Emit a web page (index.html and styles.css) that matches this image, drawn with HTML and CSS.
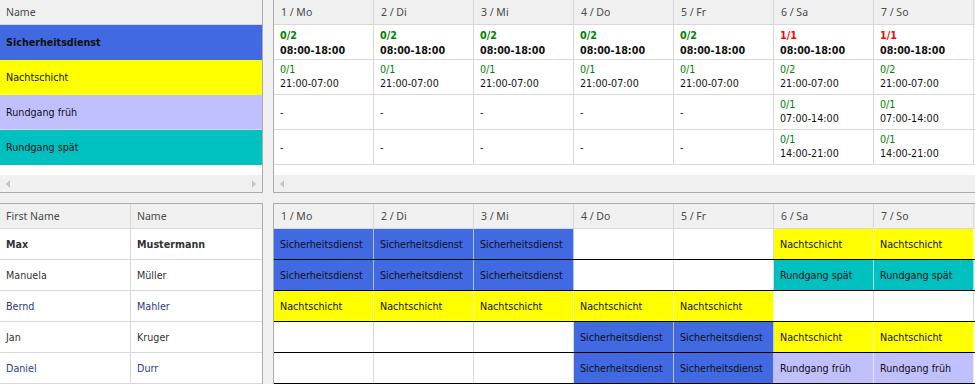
FILE: index.html
```html
<!DOCTYPE html>
<html>
<head>
  <meta charset="UTF-8">
  <title>Dienstplan</title>
  <link rel="stylesheet" href="styles.css">
</head>
<body>
  <div class="pane-row top-row">
    <div class="panel shift-list">
      <div class="grid-head">
        <div class="hcell wide">Name</div>
      </div>
      <div class="grid-body">
        <div class="row shift sd"><div class="cell wide bold">Sicherheitsdienst</div></div>
        <div class="row shift ns"><div class="cell wide">Nachtschicht</div></div>
        <div class="row shift rf"><div class="cell wide">Rundgang früh</div></div>
        <div class="row shift rs"><div class="cell wide">Rundgang spät</div></div>
      </div>
      <div class="filler"></div>
      <div class="hscroll">
        <span class="arrow left"></span>
        <span class="arrow right"></span>
      </div>
    </div>

    <div class="panel shift-days">
      <div class="grid-head">
        <div class="hcell day">1 / Mo</div>
        <div class="hcell day">2 / Di</div>
        <div class="hcell day">3 / Mi</div>
        <div class="hcell day">4 / Do</div>
        <div class="hcell day">5 / Fr</div>
        <div class="hcell day">6 / Sa</div>
        <div class="hcell day">7 / So</div>
      </div>
      <div class="grid-body">
        <div class="row shift">
          <div class="cell day slot bold"><span class="ok">0/2</span><span>08:00-18:00</span></div>
          <div class="cell day slot bold"><span class="ok">0/2</span><span>08:00-18:00</span></div>
          <div class="cell day slot bold"><span class="ok">0/2</span><span>08:00-18:00</span></div>
          <div class="cell day slot bold"><span class="ok">0/2</span><span>08:00-18:00</span></div>
          <div class="cell day slot bold"><span class="ok">0/2</span><span>08:00-18:00</span></div>
          <div class="cell day slot bold"><span class="full">1/1</span><span>08:00-18:00</span></div>
          <div class="cell day slot bold"><span class="full">1/1</span><span>08:00-18:00</span></div>
        </div>
        <div class="row shift">
          <div class="cell day slot"><span class="ok">0/1</span><span>21:00-07:00</span></div>
          <div class="cell day slot"><span class="ok">0/1</span><span>21:00-07:00</span></div>
          <div class="cell day slot"><span class="ok">0/1</span><span>21:00-07:00</span></div>
          <div class="cell day slot"><span class="ok">0/1</span><span>21:00-07:00</span></div>
          <div class="cell day slot"><span class="ok">0/1</span><span>21:00-07:00</span></div>
          <div class="cell day slot"><span class="ok">0/2</span><span>21:00-07:00</span></div>
          <div class="cell day slot"><span class="ok">0/2</span><span>21:00-07:00</span></div>
        </div>
        <div class="row shift">
          <div class="cell day">-</div>
          <div class="cell day">-</div>
          <div class="cell day">-</div>
          <div class="cell day">-</div>
          <div class="cell day">-</div>
          <div class="cell day slot"><span class="ok">0/1</span><span>07:00-14:00</span></div>
          <div class="cell day slot"><span class="ok">0/1</span><span>07:00-14:00</span></div>
        </div>
        <div class="row shift">
          <div class="cell day">-</div>
          <div class="cell day">-</div>
          <div class="cell day">-</div>
          <div class="cell day">-</div>
          <div class="cell day">-</div>
          <div class="cell day slot"><span class="ok">0/1</span><span>14:00-21:00</span></div>
          <div class="cell day slot"><span class="ok">0/1</span><span>14:00-21:00</span></div>
        </div>
      </div>
      <div class="filler"></div>
      <div class="hscroll">
        <span class="arrow left"></span>
      </div>
    </div>
  </div>

  <div class="pane-row bottom-row">
    <div class="panel staff-list">
      <div class="grid-head">
        <div class="hcell first">First Name</div>
        <div class="hcell last">Name</div>
      </div>
      <div class="grid-body">
        <div class="row staff"><div class="cell first bold">Max</div><div class="cell last bold">Mustermann</div></div>
        <div class="row staff"><div class="cell first">Manuela</div><div class="cell last">Müller</div></div>
        <div class="row staff alt"><div class="cell first">Bernd</div><div class="cell last">Mahler</div></div>
        <div class="row staff"><div class="cell first">Jan</div><div class="cell last">Kruger</div></div>
        <div class="row staff alt"><div class="cell first">Daniel</div><div class="cell last">Durr</div></div>
      </div>
    </div>

    <div class="panel roster">
      <div class="grid-head">
        <div class="hcell day">1 / Mo</div>
        <div class="hcell day">2 / Di</div>
        <div class="hcell day">3 / Mi</div>
        <div class="hcell day">4 / Do</div>
        <div class="hcell day">5 / Fr</div>
        <div class="hcell day">6 / Sa</div>
        <div class="hcell day">7 / So</div>
      </div>
      <div class="grid-body">
        <div class="row plan">
          <div class="cell day sd">Sicherheitsdienst</div>
          <div class="cell day sd">Sicherheitsdienst</div>
          <div class="cell day sd">Sicherheitsdienst</div>
          <div class="cell day"></div>
          <div class="cell day"></div>
          <div class="cell day ns">Nachtschicht</div>
          <div class="cell day ns">Nachtschicht</div>
        </div>
        <div class="row plan">
          <div class="cell day sd">Sicherheitsdienst</div>
          <div class="cell day sd">Sicherheitsdienst</div>
          <div class="cell day sd">Sicherheitsdienst</div>
          <div class="cell day"></div>
          <div class="cell day"></div>
          <div class="cell day rs">Rundgang spät</div>
          <div class="cell day rs">Rundgang spät</div>
        </div>
        <div class="row plan">
          <div class="cell day ns">Nachtschicht</div>
          <div class="cell day ns">Nachtschicht</div>
          <div class="cell day ns">Nachtschicht</div>
          <div class="cell day ns">Nachtschicht</div>
          <div class="cell day ns">Nachtschicht</div>
          <div class="cell day"></div>
          <div class="cell day"></div>
        </div>
        <div class="row plan">
          <div class="cell day"></div>
          <div class="cell day"></div>
          <div class="cell day"></div>
          <div class="cell day sd">Sicherheitsdienst</div>
          <div class="cell day sd">Sicherheitsdienst</div>
          <div class="cell day ns">Nachtschicht</div>
          <div class="cell day ns">Nachtschicht</div>
        </div>
        <div class="row plan">
          <div class="cell day"></div>
          <div class="cell day"></div>
          <div class="cell day"></div>
          <div class="cell day sd">Sicherheitsdienst</div>
          <div class="cell day sd">Sicherheitsdienst</div>
          <div class="cell day rf">Rundgang früh</div>
          <div class="cell day rf">Rundgang früh</div>
        </div>
      </div>
    </div>
  </div>
</body>
</html>
```

FILE: styles.css
```css
:root {
  --bg-color: #f0f0f0;
  --panel-border: #acacac;
  --grid-line: #d8d8d8;
  --head-text: #4a4a4a;
  --text-color: #111111;

  --sd-color: #4169e1;
  --ns-color: #ffff00;
  --rf-color: #c0c0ff;
  --rs-color: #00c0c0;

  --open-color: #008000;
  --full-color: #ff0000;
}

html, body {
  height: 100%;
  margin: 0;
  overflow: hidden;
}

body {
  background-color: var(--bg-color);
  font-family: "DejaVu Sans", Verdana, sans-serif;
  font-size: 9.6px;
  color: var(--text-color);
  display: flex;
  flex-direction: column;
  gap: 10px;
}

.pane-row {
  display: flex;
  gap: 10px;
  flex-shrink: 0;
}
.top-row { height: 193px; }
.bottom-row { flex-grow: 1; }

.panel {
  background-color: #ffffff;
  display: flex;
  flex-direction: column;
  overflow: hidden;
  box-sizing: border-box;
}
.shift-list,
.staff-list {
  width: 263px;
  flex-shrink: 0;
  border-right: 1px solid var(--panel-border);
}
.shift-days,
.roster {
  flex-grow: 1;
  border-left: 1px solid var(--panel-border);
}
.top-row .panel { border-bottom: 1px solid var(--panel-border); }
.bottom-row .panel { border-top: 1px solid var(--panel-border); }

/* header strip */
.grid-head {
  display: flex;
  height: 25px;
  flex-shrink: 0;
  background-color: var(--bg-color);
  border-bottom: 1px solid var(--grid-line);
  box-sizing: border-box;
}
.hcell {
  font-family: "Noto Sans", "Open Sans", sans-serif;
  font-size: 10.5px;
  color: var(--head-text);
  display: flex;
  align-items: center;
  padding-left: 6px;
  box-sizing: border-box;
  border-right: 1px solid var(--grid-line);
  white-space: nowrap;
}
.hcell.day { padding-left: 7px; }

.row {
  display: flex;
  box-sizing: border-box;
  border-bottom: 1px solid var(--grid-line);
}
.row.shift { height: 35px; }
.row.staff,
.row.plan { height: 31px; }
.row.plan { border-bottom-color: #000000; }

.cell {
  display: flex;
  align-items: center;
  padding-left: 6px;
  box-sizing: border-box;
  white-space: nowrap;
  overflow: hidden;
  border-right: 1px solid var(--grid-line);
}

.wide { width: 100%; border-right: none; }
.day { width: 100px; flex-shrink: 0; }
.first { width: 131px; flex-shrink: 0; }
.last { flex-grow: 1; border-right: none; padding-left: 6px; }
.hcell.last { padding-left: 6px; }

.bold { font-weight: bold; }

.slot {
  flex-direction: column;
  align-items: flex-start;
  justify-content: center;
  line-height: 14px;
}
.slot.bold { line-height: 15px; padding-top: 1px; }
.ok { color: var(--open-color); }
.full { color: var(--full-color); }

/* shift colours */
.sd { background-color: var(--sd-color); }
.ns { background-color: var(--ns-color); }
.rf { background-color: var(--rf-color); }
.rs { background-color: var(--rs-color); }
.row.sd { border-bottom-color: var(--sd-color); }
.row.ns { border-bottom-color: var(--ns-color); }
.row.rf { border-bottom-color: #d6d6ff; }
.row.rs { border-bottom-color: var(--rs-color); }
.cell.sd, .cell.ns, .cell.rf, .cell.rs {
  border-right-color: rgba(255, 255, 255, 0.6);
}

.staff .cell { color: #333333; }
.staff.alt .cell { color: #2b3a8a; }

.filler { flex-grow: 1; }

.hscroll {
  height: 17px;
  flex-shrink: 0;
  background-color: var(--bg-color);
  display: flex;
  align-items: center;
  justify-content: space-between;
  padding: 0 6px;
}
.arrow {
  width: 0;
  height: 0;
  border-top: 4px solid transparent;
  border-bottom: 4px solid transparent;
}
.arrow.left { border-right: 4px solid #c2c2c2; }
.arrow.right { border-left: 4px solid #c2c2c2; }
```
